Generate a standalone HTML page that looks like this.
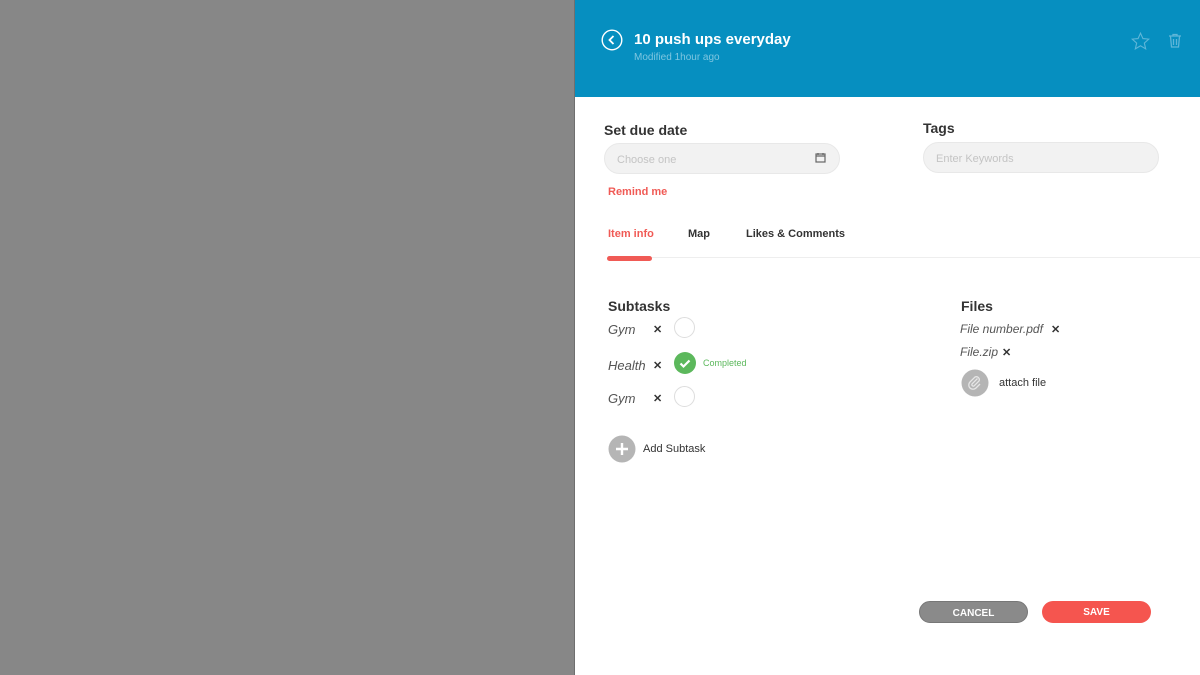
<!DOCTYPE html>
<html><head><style>
*{margin:0;padding:0;box-sizing:border-box}
body{width:1200px;height:675px;overflow:hidden;background:#878787;font-family:"Liberation Sans",Arial,sans-serif;position:relative}
.p{position:absolute;left:574px;top:0;width:626px;height:675px;background:#fff;border-left:1px solid #6f6f6f}
.hd{position:absolute;left:0;top:0;width:626px;height:97px;background:#068fc0}
.a{position:absolute;white-space:nowrap}
.h2{font-size:15px;font-weight:bold;color:#333}
.inp{position:absolute;height:31px;border-radius:16px;background:#f2f2f2;border:1px solid #e8e8e8;font-size:11px;color:#c4c4c4;padding:10px 12px}
.it{font-size:13px;font-style:italic;color:#555}
.x{font-size:11px;font-weight:bold;color:#333}
.c{position:absolute;width:21px;height:21px;border-radius:50%;border:1px solid #ddd;background:#fff}
.btn{position:absolute;height:22px;border-radius:11px;color:#fff;font-size:10px;font-weight:bold;text-align:center;line-height:23px}
</style></head><body>
<div class="p">
<div class="hd">
<svg class="a" style="left:26px;top:29px" width="22" height="22" viewBox="0 0 22 22"><circle cx="11" cy="11" r="9.8" fill="none" stroke="#fff" stroke-width="1.4"/><path d="M12.5 7 L8.5 11 L12.5 15" fill="none" stroke="#fff" stroke-width="1.8"/></svg>
<div class="a" style="left:59px;top:31px;font-size:15px;font-weight:bold;color:#fff">10 push ups everyday</div>
<div class="a" style="left:59px;top:52px;font-size:10px;color:#7fc6e0">Modified 1hour ago</div>
<svg class="a" style="left:556px;top:32px" width="19" height="18" viewBox="0 0 24 23"><path d="M12 1.5l3.1 6.9 7.4.7-5.6 5 1.7 7.4L12 17.6l-6.6 3.9 1.7-7.4-5.6-5 7.4-.7z" fill="none" stroke="#5fb6d8" stroke-width="1.4"/></svg>
<svg class="a" style="left:593px;top:33px" width="14" height="15" viewBox="0 0 14 15"><path d="M1 3h12M5 3V1.5h4V3M2.5 3.5l1 10.5h7l1-10.5M5.5 6v6M8.5 6v6" fill="none" stroke="#5fb6d8" stroke-width="1.3"/></svg>
</div>
<div class="a h2" style="left:29px;top:122px;font-size:14px">Set due date</div>
<div class="inp" style="left:29px;top:143px;width:236px">Choose one</div>
<svg class="a" style="left:240px;top:152px" width="11" height="11" viewBox="0 0 11 11"><rect x="1" y="2" width="9" height="8" fill="none" stroke="#666" stroke-width="1.2"/><path d="M1 4h9M3 1v2M8 1v2" stroke="#666" stroke-width="1.2"/></svg>
<div class="a" style="left:33px;top:186px;font-size:11px;font-weight:bold;color:#f05a55">Remind me</div>
<div class="a h2" style="left:348px;top:120px;font-size:14px">Tags</div>
<div class="inp" style="left:348px;top:142px;width:236px">Enter Keywords</div>
<div class="a" style="left:33px;top:228px;font-size:11px;font-weight:bold;color:#f05a55">Item info</div>
<div class="a" style="left:113px;top:228px;font-size:11px;font-weight:bold;color:#333">Map</div>
<div class="a" style="left:171px;top:228px;font-size:11px;font-weight:bold;color:#333">Likes &amp; Comments</div>
<div class="a" style="left:33px;top:257px;width:593px;height:1px;background:#eee"></div>
<div class="a" style="left:32px;top:256px;width:45px;height:5px;border-radius:3px;background:#f05a55"></div>
<div class="a h2" style="left:33px;top:298px;font-size:14px">Subtasks</div>
<div class="a it" style="left:33px;top:322px">Gym</div><div class="a x" style="left:78px;top:323px">✕</div><div class="c" style="left:99px;top:317px"></div>
<div class="a it" style="left:33px;top:358px">Health</div><div class="a x" style="left:78px;top:359px">✕</div>
<svg class="a" style="left:99px;top:352px" width="22" height="22" viewBox="0 0 22 22"><circle cx="11" cy="11" r="11" fill="#5cb85c"/><path d="M6.5 11.5l3 3 6-6" fill="none" stroke="#fff" stroke-width="2.2"/></svg>
<div class="a" style="left:128px;top:358px;font-size:9px;color:#5cb85c">Completed</div>
<div class="a it" style="left:33px;top:391px">Gym</div><div class="a x" style="left:78px;top:392px">✕</div><div class="c" style="left:99px;top:386px"></div>
<svg class="a" style="left:33px;top:435px" width="28" height="28" viewBox="0 0 28 28"><circle cx="14" cy="14" r="13.5" fill="#b5b5b5"/><path d="M14 8v12M8 14h12" stroke="#fff" stroke-width="2.4"/></svg>
<div class="a" style="left:68px;top:443px;font-size:11px;color:#333">Add Subtask</div>
<div class="a h2" style="left:386px;top:298px;font-size:14px">Files</div>
<div class="a it" style="left:385px;top:322px;font-size:12px">File number.pdf</div><div class="a x" style="left:476px;top:323px">✕</div>
<div class="a it" style="left:385px;top:345px;font-size:12px">File.zip</div><div class="a x" style="left:427px;top:346px">✕</div>
<svg class="a" style="left:386px;top:369px" width="28" height="28" viewBox="0 0 28 28"><circle cx="14" cy="14" r="13.5" fill="#b5b5b5"/><path d="M16.5 9.5l-5.5 5.5a1.5 1.5 0 0 0 2 2l5-5a3 3 0 0 0-4-4l-5 5a4.2 4.2 0 0 0 6 6l4-4" fill="none" stroke="#e6e6e6" stroke-width="1.3"/></svg>
<div class="a" style="left:424px;top:377px;font-size:11px;color:#333">attach file</div>
<div class="btn" style="left:344px;top:601px;width:109px;background:#8a8a8a;border:1px solid #777">CANCEL</div>
<div class="btn" style="left:467px;top:601px;width:109px;background:#f5554f">SAVE</div>
</div>
</body></html>
